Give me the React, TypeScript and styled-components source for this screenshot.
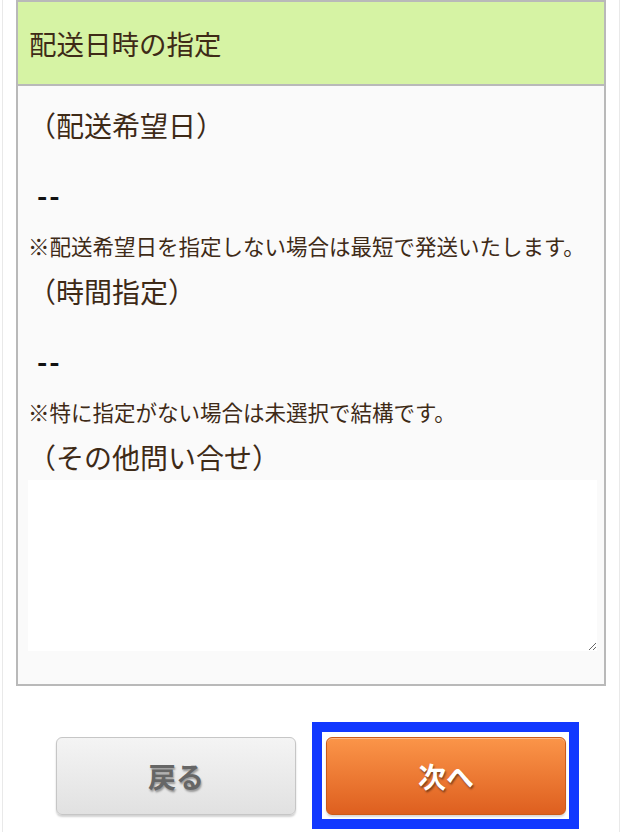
import React from "react";
import styled, { createGlobalStyle, css } from "styled-components";

const GlobalStyle = createGlobalStyle`
  * { box-sizing: border-box; }
  body {
    margin: 0;
    background: #ffffff;
    font-family: "Noto Sans CJK JP", "Noto Sans", sans-serif;
    color: #3e2a17;
  }
`;

type Section = {
  label: string;
  note: string;
};

const sections: Section[] = [
  { label: "（配送希望日）", note: "※配送希望日を指定しない場合は最短で発送いたします。" },
  { label: "（時間指定）", note: "※特に指定がない場合は未選択で結構です。" },
];

const App = () => {
  return (
    <>
      <GlobalStyle />
      <Page>
        <Panel>
          <PanelHeader>配送日時の指定</PanelHeader>
          <PanelBody>
            {sections.map((s, i) => (
              <Field key={s.label} first={i === 0}>
                <Label>{s.label}</Label>
                <Value>--</Value>
                <Note>{s.note}</Note>
              </Field>
            ))}
            <Field>
              <Label>（その他問い合せ）</Label>
              <TextArea />
            </Field>
          </PanelBody>
        </Panel>
        <ButtonRow>
          <Button variant="back" type="button">戻る</Button>
          <FocusRing>
            <Button variant="next" type="button">次へ</Button>
          </FocusRing>
        </ButtonRow>
      </Page>
    </>
  );
};

export default App;

const Page = styled.div`
  margin-left: 2px;
  width: 618px;
  min-height: 832px;
  border-left: 1px solid #e9e9e9;
  border-right: 1px solid #e9e9e9;
  padding: 0 13px;
`;

const Panel = styled.section`
  border: 2px solid #b9b9b9;
  background: #fafafa;
`;

const PanelHeader = styled.h2`
  margin: 0;
  height: 84px;
  display: flex;
  align-items: center;
  padding-left: 11px;
  background: #d6f3a4;
  border-bottom: 2px solid #b9b9b9;
  font-size: 27.5px;
  font-weight: 400;
  color: #3e2a17;
`;

const PanelBody = styled.div`
  padding: 19px 7px 33px 10px;
  display: flex;
  flex-direction: column;
`;

const Field = styled.div<{ first?: boolean }>`
  display: flex;
  flex-direction: column;
  margin-top: ${(p) => (p.first ? "0" : "10px")};
`;

const Label = styled.div`
  font-size: 28px;
  line-height: 40px;
  color: #3e2a17;
`;

const Value = styled.div`
  margin-top: 30px;
  height: 40px;
  line-height: 40px;
  padding-left: 9px;
  font-size: 28px;
  font-weight: 700;
  letter-spacing: 2px;
  color: #111111;
`;

const Note = styled.p`
  margin: 16px 0 0;
  font-size: 21.5px;
  line-height: 30px;
  color: #3e2a17;
`;

const TextArea = styled.textarea`
  margin-top: 3px;
  width: 100%;
  height: 171px;
  border: none;
  background: #ffffff;
  font-size: 20px;
  font-family: inherit;
  outline: none;
`;

const ButtonRow = styled.div`
  display: flex;
  justify-content: center;
  gap: 30px;
  margin-top: 51px;
`;

const FocusRing = styled.div`
  display: flex;
  border: 10px solid #1138ff;
  padding: 5px 3px 4px 4px;
  margin: -15px -13px -14px -14px;
  background: #ffffff;
`;

const Button = styled.button<{ variant: "back" | "next" }>`
  width: 240px;
  height: 78px;
  border-radius: 6px;
  font-family: inherit;
  font-size: 28px;
  font-weight: 700;
  cursor: pointer;
  ${(p) =>
    p.variant === "back"
      ? css`
          color: #666666;
          border: 1px solid #c6c6c6;
          background: linear-gradient(#f4f4f4, #e1e1e1);
          box-shadow: 0 2px 2px rgba(0, 0, 0, 0.18);
          text-shadow: 1px 2px 2px rgba(0, 0, 0, 0.35);
        `
      : css`
          color: #ffffff;
          border: 1px solid #cc5a18;
          background: linear-gradient(#fb9549, #de5f1f);
          box-shadow: inset 0 1px 0 rgba(255, 255, 255, 0.35), 0 2px 2px rgba(0, 0, 0, 0.15);
          text-shadow: 1px 2px 2px rgba(0, 0, 0, 0.45);
        `}
`;
